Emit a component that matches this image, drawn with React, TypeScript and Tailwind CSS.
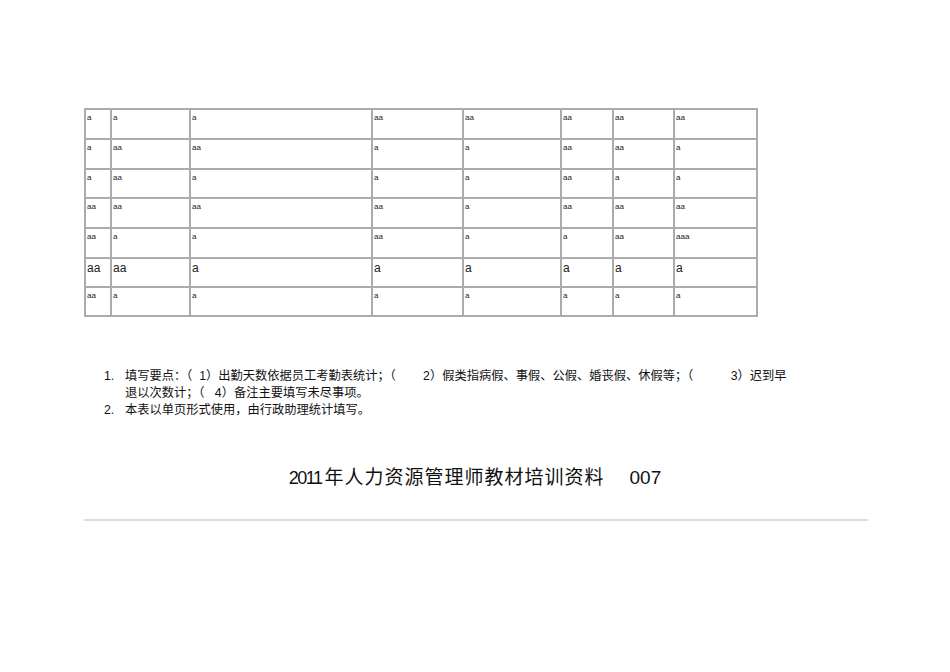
import React from "react";

const rows: string[][] = [
  ["a", "a", "a", "aa", "aa", "aa", "aa", "aa"],
  ["a", "aa", "aa", "a", "a", "aa", "aa", "a"],
  ["a", "aa", "a", "a", "a", "aa", "a", "a"],
  ["aa", "aa", "aa", "aa", "a", "aa", "aa", "aa"],
  ["aa", "a", "a", "aa", "a", "a", "aa", "aaa"],
  ["aa", "aa", "a", "a", "a", "a", "a", "a"],
  ["aa", "a", "a", "a", "a", "a", "a", "a"],
];
const heights = ["h-[30px]", "h-[30px]", "h-[29px]", "h-[30px]", "h-[30px]", "h-[29px]", "h-[29px]"];

export default function App() {
  return (
    <div
      className="w-[950px] h-[672px] bg-white text-[#111] flex flex-col"
      style={{ fontFamily: '"Liberation Sans", Arial, "Noto Sans CJK SC", sans-serif' }}
    >
      <div className="ml-[84px] mt-[108px] w-[674px] grid grid-cols-[26px_79px_182px_91px_98px_52px_61px_85px] border-r-2 border-b-2 border-[#ababab]">
        {rows.map((r, i) =>
          r.map((c, j) => (
            <div
              key={`${i}-${j}`}
              className={`${heights[i]} border-l-2 border-t-2 border-[#ababab] pl-[1px] ${
                i === 5 ? "text-[12px] leading-[14px] pt-[2px]" : "text-[8px] leading-[10px] pt-[3px]"
              } text-[#222]`}
            >
              {c}
            </div>
          ))
        )}
      </div>

      <div className="ml-[104px] mt-[51px] text-[12.25px] leading-[17px] text-[#111]">
        <div className="flex">
          <span className="w-[21px] shrink-0">1.</span>
          <div>
            <div className="whitespace-pre">填写要点：（  1）出勤天数依据员工考勤表统计；（        2）假类指病假、事假、公假、婚丧假、休假等；（           3）迟到早</div>
            <div className="whitespace-pre">退以次数计；（   4）备注主要填写未尽事项。</div>
          </div>
        </div>
        <div className="flex">
          <span className="w-[21px] shrink-0">2.</span>
          <div>本表以单页形式使用，由行政助理统计填写。</div>
        </div>
      </div>

      <div className="mt-[47px] flex justify-center leading-[24px] text-[#111] whitespace-pre">
        <span className="text-[18px] tracking-[-1.5px] mr-[3px]">2011</span>
        <span className="text-[19px] tracking-[1px]">年人力资源管理师教材培训资料</span>
        <span className="text-[19px] ml-[25px]">007</span>
      </div>

      <div className="ml-[84px] mt-[29px] w-[784px] h-[2px] bg-[#dddddd]" />
    </div>
  );
}
